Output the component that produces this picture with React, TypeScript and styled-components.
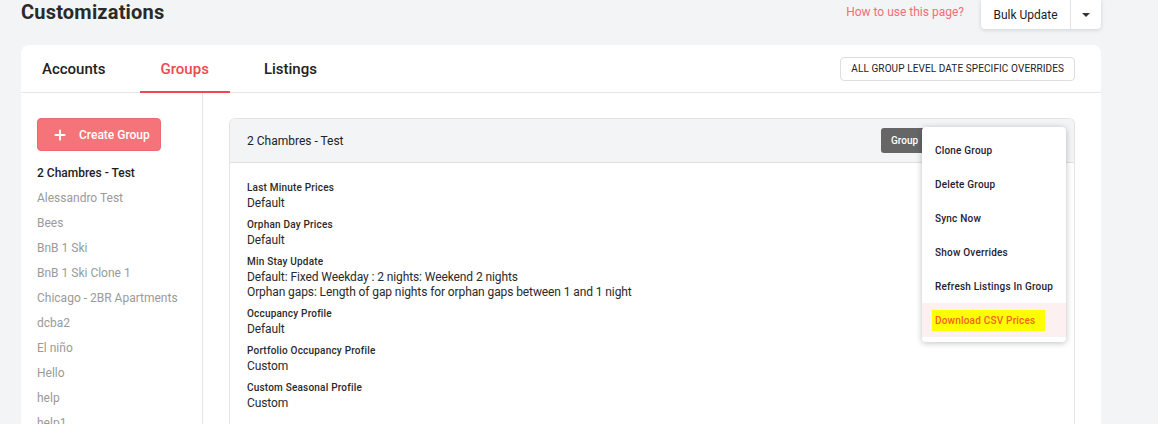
import React from "react";
import styled, { createGlobalStyle } from "styled-components";
import { FiPlus } from "react-icons/fi";

const groups = [
  "2 Chambres - Test",
  "Alessandro Test",
  "Bees",
  "BnB 1 Ski",
  "BnB 1 Ski Clone 1",
  "Chicago - 2BR Apartments",
  "dcba2",
  "El niño",
  "Hello",
  "help",
  "help1",
];

const fields = [
  { label: "Last Minute Prices", values: ["Default"] },
  { label: "Orphan Day Prices", values: ["Default"] },
  {
    label: "Min Stay Update",
    values: [
      "Default: Fixed Weekday : 2 nights: Weekend 2 nights",
      "Orphan gaps: Length of gap nights for orphan gaps between 1 and 1 night",
    ],
  },
  { label: "Occupancy Profile", values: ["Default"] },
  { label: "Portfolio Occupancy Profile", values: ["Custom"] },
  { label: "Custom Seasonal Profile", values: ["Custom"] },
];

const menuItems = [
  "Clone Group",
  "Delete Group",
  "Sync Now",
  "Show Overrides",
  "Refresh Listings In Group",
  "Download CSV Prices",
];

const App = () => {
  return (
    <>
      <GlobalStyle />
      <s.page>
        <s.header>
          <s.title>Customizations</s.title>
          <s.headerRight>
            <s.helpLink>How to use this page?</s.helpLink>
            <s.splitButton>
              <s.bulkButton>Bulk Update</s.bulkButton>
              <s.caretButton>
                <s.caret />
              </s.caretButton>
            </s.splitButton>
          </s.headerRight>
        </s.header>

        <s.card>
          <s.tabBar>
            <s.tabs>
              <s.tab>Accounts</s.tab>
              <s.tab $active>Groups</s.tab>
              <s.tab>Listings</s.tab>
            </s.tabs>
            <s.outlineButton>ALL GROUP LEVEL DATE SPECIFIC OVERRIDES</s.outlineButton>
          </s.tabBar>

          <s.body>
            <s.sidebar>
              <s.createButton>
                <FiPlus size={16} strokeWidth={2.8} />
                <span>Create Group</span>
              </s.createButton>
              <s.groupList>
                {groups.map((g, i) => (
                  <s.groupItem key={g} $active={i === 0}>
                    {g}
                  </s.groupItem>
                ))}
              </s.groupList>
            </s.sidebar>

            <s.main>
              <s.panel>
                <s.panelHeader>
                  <s.panelTitle>2 Chambres - Test</s.panelTitle>
                  <s.headerActions>
                    <s.darkButton>Group</s.darkButton>
                    <s.redButton />
                    <s.greyButton />
                  </s.headerActions>

                  {/* open dropdown from the group actions button */}
                  <s.menu>
                    {menuItems.map((m, i) => (
                      <s.menuItem key={m} $highlight={i === menuItems.length - 1}>
                        {i === menuItems.length - 1 ? <s.marked>{m}</s.marked> : m}
                      </s.menuItem>
                    ))}
                  </s.menu>
                </s.panelHeader>

                <s.panelBody>
                  {fields.map((f) => (
                    <s.field key={f.label}>
                      <s.label>{f.label}</s.label>
                      <s.values>
                        {f.values.map((v) => (
                          <s.value key={v}>{v}</s.value>
                        ))}
                      </s.values>
                    </s.field>
                  ))}
                </s.panelBody>
              </s.panel>
            </s.main>
          </s.body>
        </s.card>
      </s.page>
    </>
  );
};

const GlobalStyle = createGlobalStyle`
  body {
    margin: 0;
    background: #f3f4f6;
    font-family: Roboto, "Noto Sans", sans-serif;
    color: #222;
    overflow: hidden;
  }
`;

const s = {
  page: styled.div`
    padding: 0 57px 0 21px;
    height: 424px;
  `,
  header: styled.div`
    display: flex;
    justify-content: space-between;
    align-items: flex-start;
    height: 29px;
  `,
  title: styled.div`
    font-size: 20px;
    font-weight: 700;
    line-height: 24px;
    color: #2a2a2a;
    letter-spacing: 0.2px;
  `,
  headerRight: styled.div`
    display: flex;
    align-items: flex-start;
  `,
  helpLink: styled.div`
    font-size: 12px;
    color: #f26d74;
    line-height: 24px;
    margin-right: 17px;
  `,
  splitButton: styled.div`
    display: flex;
    height: 29px;
    background: #fff;
    border-radius: 0 0 4px 4px;
    box-shadow: 0 1px 4px rgba(0, 0, 0, 0.15);
  `,
  bulkButton: styled.div`
    width: 89px;
    display: flex;
    align-items: center;
    justify-content: center;
    font-size: 12px;
    color: #1d1d1d;
    border-right: 1px solid #e3e3e3;
  `,
  caretButton: styled.div`
    width: 30px;
    display: flex;
    align-items: center;
    justify-content: center;
  `,
  caret: styled.div`
    width: 0;
    height: 0;
    border-left: 4px solid transparent;
    border-right: 4px solid transparent;
    border-top: 4px solid #333;
  `,
  card: styled.div`
    margin-top: 16px;
    background: #fff;
    border-radius: 8px 8px 0 0;
    height: 379px;
    display: flex;
    flex-direction: column;
  `,
  tabBar: styled.div`
    height: 47px;
    display: flex;
    align-items: center;
    justify-content: space-between;
    border-bottom: 1px solid #e6e6e6;
    padding-right: 26px;
  `,
  tabs: styled.div`
    display: flex;
    align-self: stretch;
  `,
  tab: styled.div<{ $active?: boolean }>`
    padding: 2px 21px 0;
    margin-right: 13px;
    display: flex;
    align-items: center;
    font-size: 15px;
    font-weight: 500;
    color: ${(p) => (p.$active ? "#f2474f" : "#222")};
    border-bottom: 2px solid ${(p) => (p.$active ? "#f2474f" : "transparent")};
    margin-bottom: -1px;
  `,
  outlineButton: styled.div`
    height: 24px;
    padding: 0 10px;
    display: flex;
    align-items: center;
    border: 1px solid #dedede;
    border-radius: 4px;
    font-size: 10px;
    letter-spacing: 0.1px;
    color: #222;
    box-sizing: border-box;
  `,
  body: styled.div`
    flex: 1;
    display: flex;
    min-height: 0;
  `,
  sidebar: styled.div`
    width: 182px;
    box-sizing: border-box;
    border-right: 1px solid #e6e6e6;
    padding: 25px 16px 0;
  `,
  createButton: styled.div`
    width: 124px;
    height: 33px;
    box-sizing: border-box;
    background: #f47479;
    border: 1px solid #ea6a70;
    border-radius: 4px;
    color: #fff;
    display: flex;
    align-items: center;
    padding-left: 14px;
    gap: 11px;
    font-size: 12px;
    font-weight: 500;
    white-space: nowrap;
  `,
  groupList: styled.div`
    margin-top: 10px;
  `,
  groupItem: styled.div<{ $active?: boolean }>`
    height: 25px;
    line-height: 25px;
    font-size: 12px;
    white-space: nowrap;
    color: ${(p) => (p.$active ? "#1d1d1d" : "#9a9a9a")};
    font-weight: ${(p) => (p.$active ? 500 : 400)};
  `,
  main: styled.div`
    flex: 1;
    padding: 25px 26px 0;
    min-width: 0;
  `,
  panel: styled.div`
    border: 1px solid #e4e4e4;
    border-bottom: none;
    border-radius: 6px 6px 0 0;
    height: 100%;
    box-sizing: border-box;
  `,
  panelHeader: styled.div`
    position: relative;
    height: 43px;
    background: #f3f4f6;
    border-bottom: 1px solid #dfdfdf;
    border-radius: 6px 6px 0 0;
    display: flex;
    align-items: center;
    justify-content: space-between;
    padding: 0 17px;
  `,
  panelTitle: styled.div`
    font-size: 12px;
    color: #222;
  `,
  headerActions: styled.div`
    display: flex;
    gap: 12px;
  `,
  darkButton: styled.div`
    width: 90px;
    height: 25px;
    border-radius: 3px;
    background: #666;
    color: #fff;
    font-size: 10px;
    font-weight: 500;
    display: flex;
    align-items: center;
    padding-left: 10px;
    box-sizing: border-box;
  `,
  redButton: styled.div`
    width: 36px;
    height: 25px;
    border-radius: 3px;
    background: #ef7b7f;
  `,
  greyButton: styled.div`
    width: 26px;
    height: 25px;
    border-radius: 3px;
    background: #e3e3e3;
  `,
  menu: styled.div`
    position: absolute;
    left: 692px;
    top: 8px;
    width: 144px;
    padding: 6px 0 5px;
    background: #fff;
    border-radius: 4px;
    box-shadow: 0 1px 6px rgba(0, 0, 0, 0.25);
    z-index: 2;
  `,
  menuItem: styled.div<{ $highlight?: boolean }>`
    height: 34px;
    display: flex;
    align-items: center;
    padding-left: 13px;
    font-size: 10px;
    font-weight: 500;
    letter-spacing: 0.2px;
    color: #1f2233;
    white-space: nowrap;
    background: ${(p) => (p.$highlight ? "#fdf0f0" : "transparent")};
  `,
  marked: styled.span`
    background: #ffff00;
    color: #f4621f;
    margin-left: -3px;
    padding: 5px 10px 5px 3px;
  `,
  panelBody: styled.div`
    padding: 18px 17px 0;
  `,
  field: styled.div`
    margin-bottom: 7px;
  `,
  label: styled.div`
    font-size: 10px;
    font-weight: 500;
    line-height: 14px;
    letter-spacing: 0.2px;
    color: #2a2a2a;
  `,
  values: styled.div`
    margin-top: 1px;
  `,
  value: styled.div`
    font-size: 12px;
    line-height: 15px;
    letter-spacing: -0.1px;
    color: #2a2a2a;
  `,
};

export default App;
